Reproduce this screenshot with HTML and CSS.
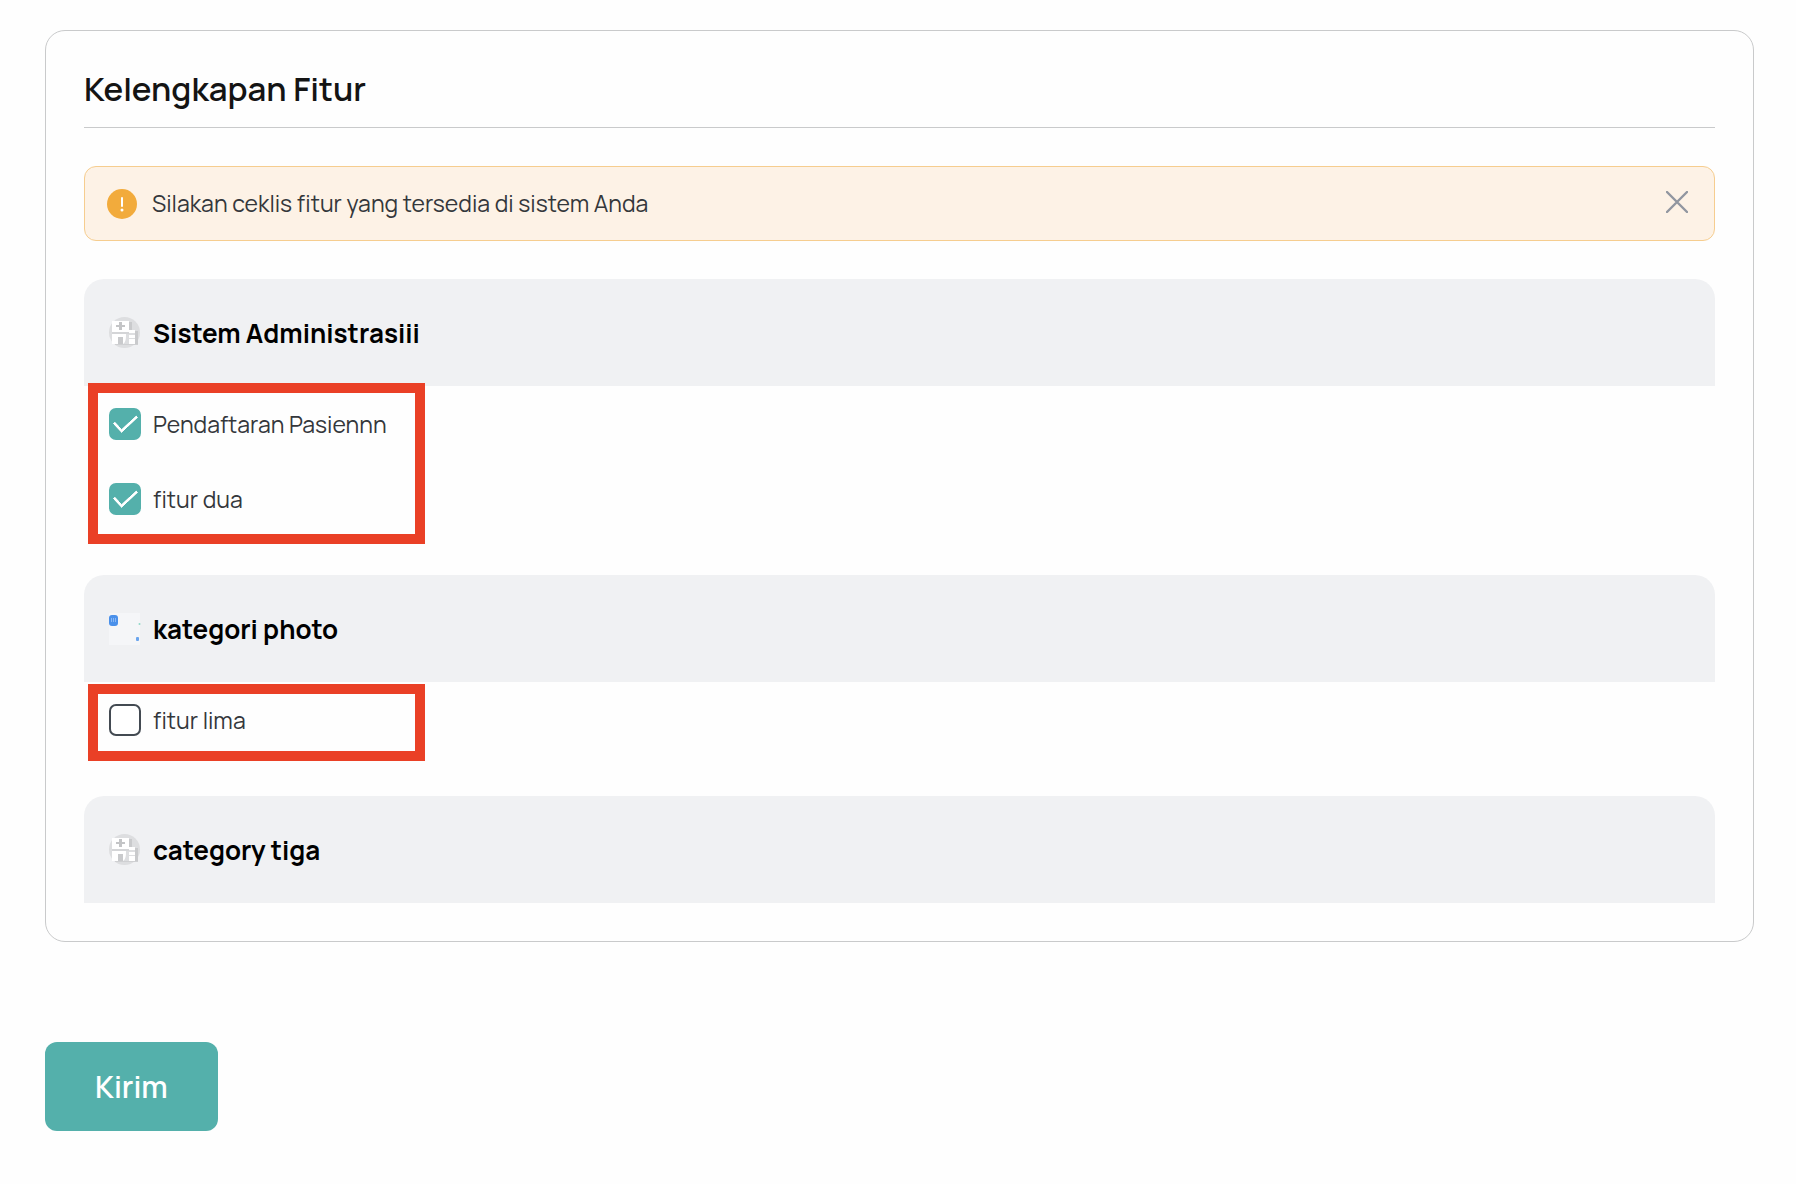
FILE: index.html
```
<!DOCTYPE html>
<html lang="id">

<head>
  <meta charset="utf-8">
  <title>Kelengkapan Fitur</title>
  <meta name="viewport" content="width=device-width, initial-scale=1.0">
  <link rel="stylesheet" href="styles.css">
</head>

<body>
  <!-- shared icon -->
  <svg class="sprite" aria-hidden="true">
    <symbol id="hospital" viewBox="0 0 32 32">
      <circle cx="15.5" cy="15.5" r="15.5" fill="#dddee0"/>
      <path d="M6 24h23v4H6z" fill="#cfd0d2"/>
      <path d="M20 5h3v9h-3zM26 14h3v13h-3z" fill="#c9cacc"/>
      <path d="M3 4h17v11H3zM3 17h17v10H3z" fill="#fff"/>
      <path d="M3 15h17v2H3z" fill="#d4d5d7"/>
      <path d="M10 5h3v3h3v2h-3v3h-3v-3H7V8h3z" fill="#c3c4c6"/>
      <path d="M9 20h5v7H9z" fill="#c9cacc"/>
      <path d="M17 17h3v10h-6c3-2 3-6 3-10z" fill="#dddee0"/>
      <path d="M20 13h6v3h-6zM20 18h6v3h-6zM20 22h6v5h-6z" fill="#fff"/>
    </symbol>
  </svg>

  <form class="container">
    <div class="card">
      <h1 class="card-title">Kelengkapan Fitur</h1>

      <div class="alert">
        <svg class="alert-icon" viewBox="0 0 30 30" aria-hidden="true">
          <circle cx="15" cy="15" r="15" fill="#f2ab3c"/>
          <path d="M15 9v8" stroke="#fff" stroke-width="2" stroke-linecap="round"/>
          <circle cx="15" cy="21" r="1.5" fill="#fff"/>
        </svg>
        <p class="alert-text">Silakan ceklis fitur yang tersedia di sistem Anda</p>
        <button class="alert-close" type="button" aria-label="Tutup">
          <svg viewBox="0 0 22 22" aria-hidden="true">
            <path d="M1 1l20 20M21 1L1 21" stroke="#9196a0" stroke-width="2.4" stroke-linecap="round"/>
          </svg>
        </button>
      </div>

      <div class="category">
        <h2 class="category-header">
          <svg class="category-icon" aria-hidden="true"><use href="#hospital"/></svg>
          Sistem Administrasiii
        </h2>
        <div class="feature-list">
          <label class="feature"><input type="checkbox" checked>Pendaftaran Pasiennn</label>
          <label class="feature"><input type="checkbox" checked>fitur dua</label>
          <div class="marker marker-tall"></div>
        </div>
      </div>

      <div class="category">
        <h2 class="category-header">
          <svg class="category-icon" viewBox="0 0 32 32" aria-hidden="true">
            <path d="M0 0h31v32H0z" fill="#f5f6f8"/>
            <rect x="0" y="2" width="9" height="11" rx="3" fill="#4a90ea"/>
            <path d="M2.500 5v4M4.500 5v4M6.500 5v4" stroke="#8ab8f4"/>
            <circle cx="30.500" cy="11" r="1" fill="#8fd8c8"/>
            <rect x="27" y="24" width="3" height="4" rx="1" fill="#6aa5ee"/>
          </svg>
          kategori photo
        </h2>
        <div class="feature-list">
          <label class="feature"><input type="checkbox">fitur lima</label>
          <div class="marker marker-short"></div>
        </div>
      </div>

      <div class="category">
        <h2 class="category-header">
          <svg class="category-icon" aria-hidden="true"><use href="#hospital"/></svg>
          category tiga
        </h2>
      </div>
    </div>

    <button class="submit" type="button">Kirim</button>
  </form>
</body>

</html>
```

FILE: styles.css
```
/* variables */
:root {
  --primary: #54b0ab;
  --border: #c9cacb;
  --text: #34373b;
  --gap: 38px;
}

/* global & fonts */
* {
  box-sizing: border-box;
  font-family: Manrope, Inter, sans-serif;
}

body {
  margin: 0;
  background: #fefefe;
  color: var(--text);
}

h1,
h2,
p {
  margin: 0;
}

.sprite {
  position: absolute;
  width: 0;
  height: 0;
}

/* layout */
.container {
  padding: 30px 42px 52px 45px;
}

.card {
  display: flex;
  flex-direction: column;
  gap: var(--gap);
  padding: var(--gap);
  border: 1px solid var(--border);
  border-radius: 20px;
}

.card-title {
  padding-bottom: 18px;
  border-bottom: 1px solid var(--border);
  color: #141414;
  font-size: 33px;
  font-weight: 600;
  line-height: 40px;
}

/* alert */
.alert {
  display: flex;
  align-items: center;
  height: 75px;
  padding: 0 22px;
  border: 1px solid #f6cd8f;
  border-radius: 12px;
  background: #fdf2e6;
}

.alert-icon {
  width: 30px;
  height: 30px;
  margin-right: 15px;
}

.alert-text {
  flex: 1;
  padding-bottom: 2px;
  font-size: 23px;
  line-height: 32px;
}

.alert-close {
  width: 30px;
  padding: 4px 4px 8px;
  border: 0;
  background: none;
  cursor: pointer;
}

.alert-close svg {
  display: block;
  width: 22px;
  height: 22px;
}

/* categories */
.category-header {
  display: flex;
  align-items: center;
  gap: 12px;
  height: 107px;
  padding: 0 25px;
  border-radius: 20px 20px 0 0;
  background: #f0f1f3;
  color: #000;
  font-size: 26px;
  font-weight: 700;
}

.category-icon {
  width: 32px;
  height: 32px;
}

.feature-list {
  position: relative;
  padding-bottom: 1px;
}

.feature {
  display: flex;
  align-items: center;
  gap: 12px;
  height: 75px;
  padding: 0 25px;
  font-size: 23px;
}

.feature input {
  appearance: none;
  width: 32px;
  height: 32px;
  margin: 0;
  border: 2px solid #434a52;
  border-radius: 7px;
  background: #fff;
}

.feature input:checked {
  display: grid;
  place-items: center;
  border-color: var(--primary);
  background: var(--primary);
}

.feature input:checked::after {
  content: "";
  width: 20px;
  height: 10px;
  margin-bottom: 7px;
  border: solid #fff;
  border-width: 0 0 3px 3px;
  border-radius: 1px;
  transform: rotate(-43deg);
}

/* red frame over the options */
.marker {
  position: absolute;
  left: 4px;
  width: 337px;
  border: 10px solid #ea4026;
  pointer-events: none;
}

.marker-tall {
  top: -3px;
  bottom: -7px;
}

.marker-short {
  top: 2px;
  bottom: -3px;
}

/* submit */
.submit {
  height: 89px;
  margin-top: 100px;
  padding: 0 50px;
  border: 0;
  border-radius: 12px;
  background: var(--primary);
  color: #fff;
  font-size: 30px;
  font-weight: 600;
  cursor: pointer;
}
```
